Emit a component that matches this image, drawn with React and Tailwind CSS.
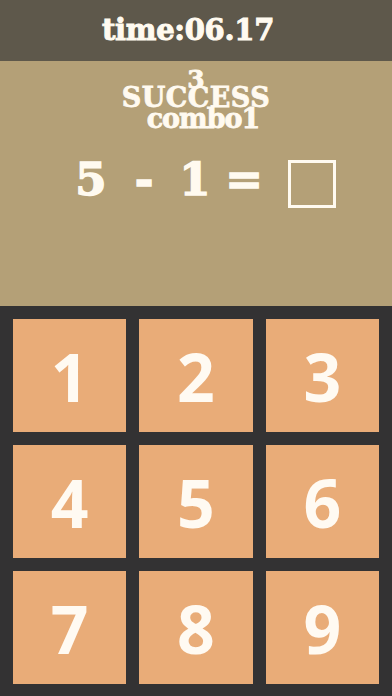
import React from "react";

const serif = "font-['DejaVu_Serif',serif] font-bold";

const Tile = ({ n }) => (
  <div className="h-[113px] bg-[#e9ac78] flex items-center justify-center">
    <span className="font-['Open_Sans',sans-serif] font-bold text-[66px] leading-none text-[#fffaf2]">{n}</span>
  </div>
);

const App = () => {
  const keys = [1, 2, 3, 4, 5, 6, 7, 8, 9];
  return (
    <div className="w-[392px] h-[696px] flex flex-col overflow-hidden">
      <header className="h-[61px] bg-[#5e584b] flex items-center justify-center pr-[16px]">
        <h1 className={`${serif} text-[29px] leading-none tracking-[-0.3px] text-[#fffaf0] [-webkit-text-stroke:1px_#fffaf0]`}>time:06.17</h1>
      </header>

      <section className="h-[245px] bg-[#b4a077] flex flex-col items-center text-[#fffaf0] [-webkit-text-stroke:0.8px_#fffaf0]">
        <div className={`${serif} mt-[6px] text-[25px] leading-none`}>3</div>
        <div className={`${serif} -mt-[8px] text-[27px] leading-none tracking-[0.5px]`}>SUCCESS</div>
        <div className={`${serif} -mt-[6px] ml-[14px] text-[27px] leading-none tracking-[-1px]`}>combo1</div>

        <div className={`${serif} mt-[25px] self-stretch flex items-start pl-[70px] text-[45px] leading-none [-webkit-text-stroke:1.5px_#fffaf0]`}>
          <span className="w-[42px] text-center">5</span>
          <span className="ml-[12px] w-[40px] text-center">-</span>
          <span className="ml-[11px] w-[40px] text-center">1</span>
          <span className="ml-[9px] w-[40px] text-center">=</span>
          <span className="ml-[24px] mt-[3px] w-[48px] h-[48px] border-[3px] border-[#fffaf0]"></span>
        </div>
      </section>

      <main className="flex-1 bg-[#333233] grid grid-cols-3 content-start gap-[13px] px-[13px] pt-[13px] pb-[12px]">
        {keys.map((n) => (
          <Tile key={n} n={n} />
        ))}
      </main>
    </div>
  );
};

export default App;
